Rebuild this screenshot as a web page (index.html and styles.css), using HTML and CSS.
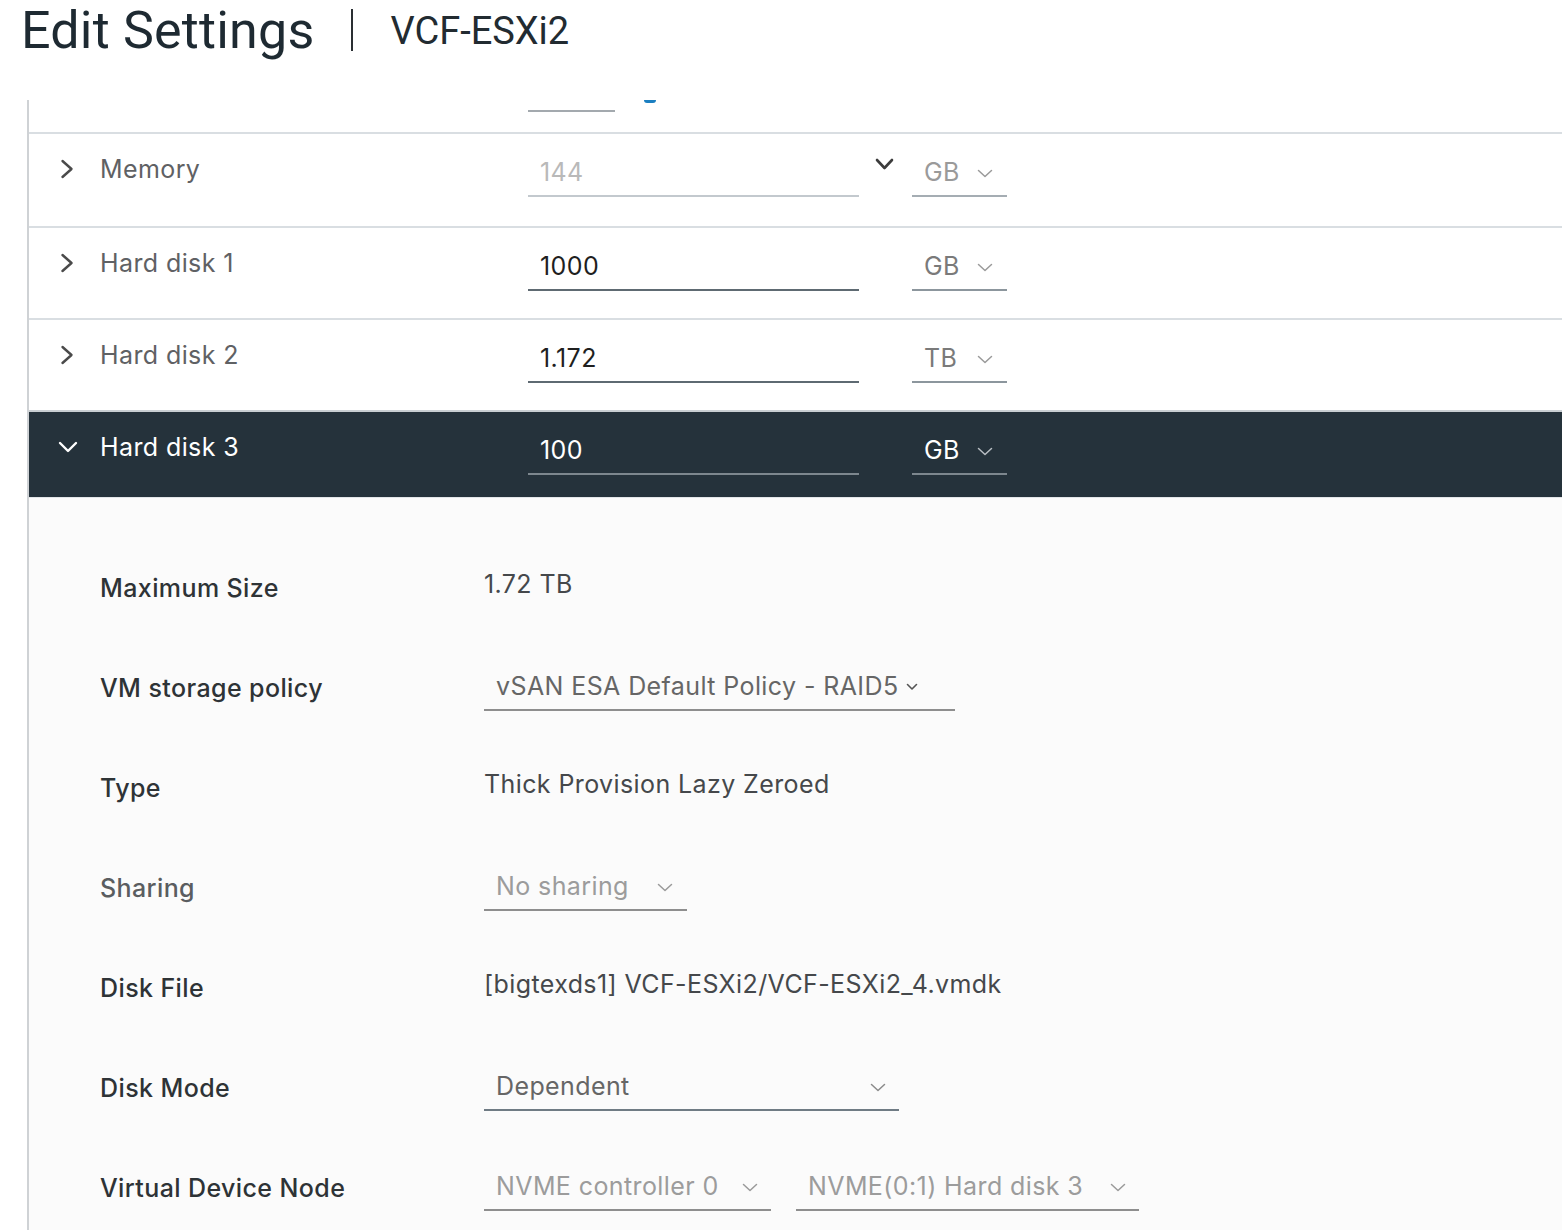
FILE: index.html
```html
<!DOCTYPE html>
<html>
<head>
<meta charset="utf-8">
<title>Edit Settings | VCF-ESXi2</title>
<link rel="stylesheet" href="styles.css">
</head>
<body>
<div class="header">
  <h1 class="title">Edit Settings</h1>
  <span class="sep"></span>
  <span class="vm">VCF-ESXi2</span>
</div>
<div class="panel">
  <div class="row row-partial">
    <div class="partial-line"></div>
    <div class="partial-blue"></div>
  </div>

  <div class="row">
    <span class="toggle"><svg width="14" height="20" viewBox="0 0 14 20"><path d="M2.5 2 L11.5 10 L2.5 18" fill="none" stroke="#4a4a4a" stroke-width="2.4" stroke-linecap="round" stroke-linejoin="round"/></svg></span>
    <span class="row-label">Memory</span>
    <div class="field field-num is-disabled"><span>144</span></div>
    <span class="spin"><svg width="19" height="13" viewBox="0 0 19 13"><path d="M2 2 L9.5 10 L17 2" fill="none" stroke="#3c3c3c" stroke-width="2.6" stroke-linecap="round" stroke-linejoin="round"/></svg></span>
    <div class="field field-unit is-disabled"><span>GB</span><svg class="caret" width="16" height="9" viewBox="0 0 16 9"><path d="M1.5 1.5 L8 7.5 L14.5 1.5" fill="none" stroke="#9a9a9a" stroke-width="1.5" stroke-linecap="round" stroke-linejoin="round"/></svg></div>
  </div>

  <div class="row">
    <span class="toggle"><svg width="14" height="20" viewBox="0 0 14 20"><path d="M2.5 2 L11.5 10 L2.5 18" fill="none" stroke="#4a4a4a" stroke-width="2.4" stroke-linecap="round" stroke-linejoin="round"/></svg></span>
    <span class="row-label">Hard disk 1</span>
    <div class="field field-num"><span>1000</span></div>
    <span class="spin"></span>
    <div class="field field-unit"><span>GB</span><svg class="caret" width="16" height="9" viewBox="0 0 16 9"><path d="M1.5 1.5 L8 7.5 L14.5 1.5" fill="none" stroke="#9a9a9a" stroke-width="1.5" stroke-linecap="round" stroke-linejoin="round"/></svg></div>
  </div>

  <div class="row">
    <span class="toggle"><svg width="14" height="20" viewBox="0 0 14 20"><path d="M2.5 2 L11.5 10 L2.5 18" fill="none" stroke="#4a4a4a" stroke-width="2.4" stroke-linecap="round" stroke-linejoin="round"/></svg></span>
    <span class="row-label">Hard disk 2</span>
    <div class="field field-num"><span>1.172</span></div>
    <span class="spin"></span>
    <div class="field field-unit"><span>TB</span><svg class="caret" width="16" height="9" viewBox="0 0 16 9"><path d="M1.5 1.5 L8 7.5 L14.5 1.5" fill="none" stroke="#9a9a9a" stroke-width="1.5" stroke-linecap="round" stroke-linejoin="round"/></svg></div>
  </div>

  <div class="row row-active">
    <span class="toggle"><svg width="20" height="14" viewBox="0 0 20 14"><path d="M2 3 L10 11 L18 3" fill="none" stroke="#ffffff" stroke-width="2.4" stroke-linecap="round" stroke-linejoin="round"/></svg></span>
    <span class="row-label">Hard disk 3</span>
    <div class="field field-num"><span>100</span></div>
    <span class="spin"></span>
    <div class="field field-unit"><span>GB</span><svg class="caret" width="16" height="9" viewBox="0 0 16 9"><path d="M1.5 1.5 L8 7.5 L14.5 1.5" fill="none" stroke="#b8bec3" stroke-width="1.5" stroke-linecap="round" stroke-linejoin="round"/></svg></div>
  </div>

  <div class="details">
    <div class="drow">
      <div class="dlabel">Maximum Size</div>
      <div class="dvalue">1.72 TB</div>
    </div>
    <div class="drow">
      <div class="dlabel">VM storage policy</div>
      <div class="select select-policy"><span>vSAN ESA Default Policy - RAID5</span><svg class="caret-sm" width="12" height="8" viewBox="0 0 12 8"><path d="M1.5 1.5 L6 6 L10.5 1.5" fill="none" stroke="#555" stroke-width="1.6" stroke-linecap="round" stroke-linejoin="round"/></svg></div>
    </div>
    <div class="drow">
      <div class="dlabel">Type</div>
      <div class="dvalue">Thick Provision Lazy Zeroed</div>
    </div>
    <div class="drow">
      <div class="dlabel is-muted">Sharing</div>
      <div class="select select-sharing is-disabled"><span>No sharing</span><svg class="caret" width="16" height="9" viewBox="0 0 16 9"><path d="M1.5 1.5 L8 7.5 L14.5 1.5" fill="none" stroke="#9a9a9a" stroke-width="1.5" stroke-linecap="round" stroke-linejoin="round"/></svg></div>
    </div>
    <div class="drow">
      <div class="dlabel">Disk File</div>
      <div class="dvalue">[bigtexds1] VCF-ESXi2/VCF-ESXi2_4.vmdk</div>
    </div>
    <div class="drow">
      <div class="dlabel">Disk Mode</div>
      <div class="select select-mode"><span>Dependent</span><svg class="caret" width="16" height="9" viewBox="0 0 16 9"><path d="M1.5 1.5 L8 7.5 L14.5 1.5" fill="none" stroke="#8a8a8a" stroke-width="1.5" stroke-linecap="round" stroke-linejoin="round"/></svg></div>
    </div>
    <div class="drow">
      <div class="dlabel">Virtual Device Node</div>
      <div class="select select-ctrl is-disabled"><span>NVME controller 0</span><svg class="caret" width="16" height="9" viewBox="0 0 16 9"><path d="M1.5 1.5 L8 7.5 L14.5 1.5" fill="none" stroke="#9a9a9a" stroke-width="1.5" stroke-linecap="round" stroke-linejoin="round"/></svg></div>
      <div class="select select-node is-disabled"><span>NVME(0:1) Hard disk 3</span><svg class="caret" width="16" height="9" viewBox="0 0 16 9"><path d="M1.5 1.5 L8 7.5 L14.5 1.5" fill="none" stroke="#9a9a9a" stroke-width="1.5" stroke-linecap="round" stroke-linejoin="round"/></svg></div>
    </div>
  </div>
</div>
</body>
</html>
```

FILE: styles.css
```css
* { box-sizing: border-box; }

html, body {
  margin: 0;
  padding: 0;
  background: #ffffff;
  overflow: hidden;
}

body {
  font-family: Inter, "Open Sans", "Liberation Sans", Arial, sans-serif;
  color: #333;
  width: 1562px;
  height: 1230px;
}

/* Header */
.header {
  height: 100px;
  padding: 3px 0 0 21px;
  display: flex;
  align-items: flex-start;
}

.title {
  margin: 0;
  font-family: Roboto, "Liberation Sans", Arial, sans-serif;
  font-size: 52px;
  line-height: 56px;
  font-weight: 400;
  color: #1e2a32;
  letter-spacing: 0.2px;
}

.sep {
  width: 2px;
  height: 42px;
  background: #2a2f33;
  margin: 6px 37px 0 37px;
}

.vm {
  font-family: Roboto, "Liberation Sans", Arial, sans-serif;
  font-size: 38px;
  line-height: 56px;
  color: #222b31;
}

/* Panel */
.panel {
  margin-left: 27px;
  border-left: 2px solid #cfd2d5;
  height: 1130px;
  overflow: hidden;
}

.row {
  display: flex;
  align-items: flex-start;
  height: 92px;
  border-top: 2px solid #d9dee2;
  padding: 20px 0 0 31px;
}

.row-partial {
  height: 34px;
  border-top: none;
  padding: 0;
  border-bottom: 2px solid #d9dee2;
  position: relative;
}

.row-partial + .row { border-top: none; }

.partial-line {
  margin: 10px 0 0 499px;
  width: 87px;
  height: 2px;
  background: #a3a9ae;
}

.partial-blue {
  margin: 0 0 0 29px;
  width: 12px;
  height: 3px;
  border-radius: 0 0 3px 3px;
  background: #1b7fc1;
}

.toggle {
  flex: 0 0 14px;
  height: 30px;
  display: flex;
  align-items: center;
  justify-content: center;
  margin-right: 26px;
}

.row-label {
  flex: 0 0 428px;
  font-size: 25px;
  letter-spacing: 0.4px;
  line-height: 30px;
  color: #5f6164;
}

.field {
  margin-top: 3px;
  font-size: 25px;
  letter-spacing: 0.4px;
  line-height: 30px;
  padding: 0 12px 8px 12px;
  border-bottom: 2px solid #5e6a72;
  color: #1f1f1f;
  display: flex;
  align-items: center;
}

.field-num { flex: 0 0 331px; }

.field-unit {
  flex: 0 0 95px;
  color: #7a7a7a;
  border-bottom-color: #8c969d;
  padding-right: 14px;
}

.field-unit .caret { margin-left: auto; margin-top: 3px; }

.field.is-disabled { color: #b9b9b9; border-bottom-color: #c3c9ce; }
.field-unit.is-disabled { color: #9a9a9a; border-bottom-color: #a5adb3; }

.spin {
  flex: 0 0 53px;
  padding: 4px 0 0 16px;
  display: flex;
}

.row-active {
  height: 88px;
  background: #25323b;
  border-top-color: #c9ced2;
  border-bottom: 1px solid #e2e5e8;
  padding-left: 29px;
}

.row-active .toggle {
  flex: 0 0 20px;
  margin-right: 22px;
}

.row-active .row-label { color: #ffffff; }
.row-active .field { color: #ffffff; border-bottom-color: #7d878e; }
.row-active .field-unit { color: #ffffff; border-bottom-color: #7d878e; }

/* Details */
.details {
  background: #fbfbfb;
  padding: 40px 0 0 71px;
}

.drow {
  display: flex;
  align-items: center;
  height: 100px;
}

.dlabel {
  flex: 0 0 384px;
  font-size: 25px;
  letter-spacing: 0.4px;
  line-height: 30px;
  font-weight: 500;
  color: #2e3336;
}

.dlabel.is-muted { color: #5a5d60; }

.dvalue {
  font-size: 25px;
  letter-spacing: 0.4px;
  line-height: 30px;
  color: #45484b;
  margin-bottom: 8px;
}

.select {
  display: flex;
  align-items: center;
  font-size: 25px;
  letter-spacing: 0.4px;
  line-height: 30px;
  padding: 0 13px 8px 12px;
  border-bottom: 2px solid #8e8e8e;
  color: #666;
  margin-top: 6px;
}

.select .caret { margin-left: auto; margin-top: 3px; }

.select-policy { width: 471px; }
.select-policy .caret-sm { margin-left: 7px; margin-top: 2px; }

.select-sharing { width: 203px; padding-right: 14px; }
.select-mode { width: 415px; border-bottom-color: #6f7b84; }
.select-ctrl { width: 287px; }
.select-node { width: 343px; margin-left: 25px; }

.select.is-disabled { color: #9c9c9c; }
```
